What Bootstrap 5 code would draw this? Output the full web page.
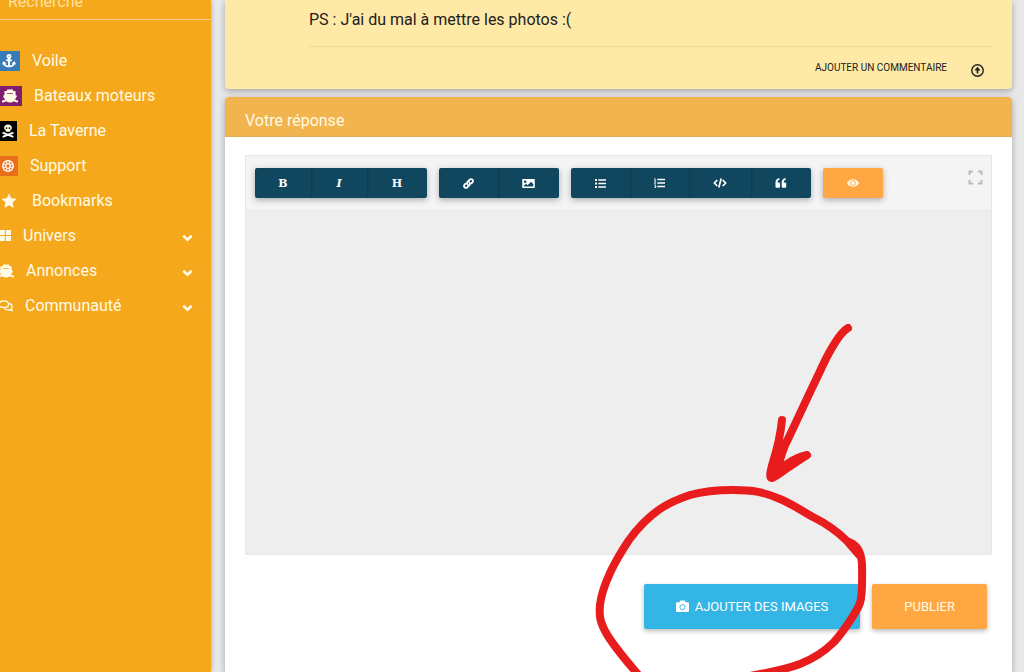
<!DOCTYPE html>
<html lang="fr">
<head>
<meta charset="utf-8">
<meta name="viewport" content="width=device-width, initial-scale=1">
<title>Votre réponse</title>
<link href="https://cdn.jsdelivr.net/npm/bootstrap@5.3.0/dist/css/bootstrap.min.css" rel="stylesheet">
<style>
  body { font-family: Roboto, "Liberation Sans", sans-serif; font-size: 16px; background: #e8e8e8; color: #212121; }
  .shell { height: 100vh; }
  .side { flex: 0 0 211px; background: #f5a81c; box-shadow: 0 0 5px rgba(0,0,0,.3); }
  /* the page is scrolled: the search box is partly above the fold */
  .search { margin-top: -16px; height: 36px; padding: 0 8px; border: 0; border-bottom: 1px solid #fbd388; background: transparent; color: #fff; }
  .search::placeholder { color: #ffe29c; opacity: 1; }
  .side-nav { padding-top: 23px; }
  .side-link { height: 35px; color: #fffbe6; text-decoration: none; gap: 12px; padding-right: 18px; }
  .tile { height: 20px; display: flex; align-items: center; }
  .tile svg, .ed-btn svg, .act svg, .round svg, .full svg { display: block; fill: currentColor; }
  .t-voile { background: #377bb8; padding: 0 4px 0 2px; }
  .t-bateau { background: #7d1e70; padding: 0 4px 0 2px; }
  .t-taverne { background: #000; padding: 0 3px 0 2px; }
  .t-support { background: #e8701c; padding: 0 4px 0 2px; }
  .t-star { padding: 0 4px 0 2px; }
  .main-col { padding: 0 12px 0 14px; }
  .panel { border-radius: 4px; box-shadow: 0 2px 6px rgba(0,0,0,.3); }
  .post { background: #ffe9a6; padding: 8px 20px 0 84px; height: 89px; border-radius: 0 0 4px 4px; }
  .post-foot { border-top: 1px solid #efd996; height: 43px; padding-right: 8px; gap: 24px; }
  .flat { border: 0; padding: 0; background: none; color: #212121; font-size: 10px; line-height: 16px; }
  .round { padding-top: 4px; }
  .reply { margin-top: 8px; background: #fff; border-radius: 4px 4px 0 0; }
  .reply-head { background: #f1b44f; color: #fffbe6; height: 40px; padding: 8px 20px 0; font-size: 16px; border-radius: 4px 4px 0 0; border-bottom: 1px solid #dfae59; }
  .reply-body { padding: 18px 20px; }
  .editor { border: 1px solid #e6e6e6; background: #f4f4f4; }
  .tools { height: 54px; padding: 0 8px 0 9px; gap: 12px; }
  .ed-group { border-radius: 2px; background: #11465f; box-shadow: 0 2px 6px rgba(0,0,0,.3); }
  .ed-btn { height: 30px; border: 0; padding: 0 24px; color: #fff; background: transparent; display: flex; align-items: center; justify-content: center; font: bold 11px "DejaVu Serif", serif; }
  .ed-btn + .ed-btn { box-shadow: inset 3px 0 3px -3px rgba(0,0,0,.4); }
  .ed-b { width: 56px; } .ed-h { width: 60px; }
  .view { background: #ffa743; }
  .full { border: 0; padding: 0; background: none; margin-bottom: 12px; }
  .zone { display: block; width: 100%; height: 344px; border: 0; border-top: 1px dotted #e2e2e2; background: #eee; resize: none; padding: 12px; }
  .acts { padding: 29px 5px 0; gap: 12px; }
  .act { height: 45px; border: 0; border-radius: 2px; padding: 0 32px; color: #fffbe6; font-size: 13px; box-shadow: 0 2px 5px rgba(0,0,0,.28); gap: 6px; }
  .act-img { background: #33b5e5; color: #fff; }
  .act-pub { background: #ffa743; }
  .scribble { position: absolute; top: 213px; right: 132px; pointer-events: none; }
</style>
</head>
<body>
<svg class="d-none" aria-hidden="true">
  <symbol id="ship" viewBox="0 0 16 14"><path fill-rule="evenodd" d="M5 .5h6v1.500h1.700q.9 0 .9.800V6l.9.400q.7.300.3 1l-1.800 3q1 1 3 1.200v1.800q-2.500 0-4-1.200-1.700 1.200-4 1.200t-4-1.200q-1.400 1.200-4 1.200v-1.800q2-.2 3-1.200l-1.800-3q-.4-.7.300-1l.9-.4V2.800q0-.8.900-.8H5zM5 4v.8h6V4z"/></symbol>
  <symbol id="chev" viewBox="0 0 11 8"><path d="M1.300 1.800 5.500 5.700l4.200-3.900" fill="none" stroke="#fffbe6" stroke-width="2.600"/></symbol>
</svg>
<div class="shell d-flex overflow-hidden">
  <aside class="side d-flex flex-column">
    <input class="search w-100" type="search" placeholder="Recherche" aria-label="Recherche">
    <nav class="side-nav d-flex flex-column">
      <a class="side-link d-flex align-items-center" href="#"><span class="tile t-voile"><svg width="14" height="14" viewBox="0 0 14 14"><g fill="none" stroke="#fff" stroke-width="1.900"><circle cx="7" cy="2.500" r="1.500"/><path d="M7 4v8.500M4.300 6.200h5.400M1.700 8.500Q2.200 12.400 7 12.400t5.300-3.900"/></g><path d="M0 10.500 1.500 7l3 2.500zM14 10.500l-1.500-3.500-3 2.500z" fill="#fff"/></svg></span>Voile</a>
      <a class="side-link d-flex align-items-center" href="#"><span class="tile t-bateau"><svg width="16" height="14"><use href="#ship"/></svg></span>Bateaux moteurs</a>
      <a class="side-link d-flex align-items-center" href="#"><span class="tile t-taverne"><svg width="12" height="14" viewBox="0 0 12 14"><path fill-rule="evenodd" d="M6 0.500c2.300 0 3.900 1.300 3.900 3.200 0 1.200-.7 2-1.600 2.500V7.800H3.700V6.200C2.800 5.700 2.100 4.900 2.100 3.700 2.100 1.800 3.700.500 6 .500M4.500 3.200a.9.900 0 1 0 0 1.800.9.900 0 0 0 0-1.800m3 0a.9.900 0 1 0 0 1.800.9.900 0 0 0 0-1.800"/><path d="m.6 8.600 10.800 4.200M11.400 8.600.6 12.800" stroke="#fff" stroke-width="1.800"/></svg></span>La Taverne</a>
      <a class="side-link d-flex align-items-center" href="#"><span class="tile t-support"><svg width="12" height="12" viewBox="0 0 12 12"><g fill="none" stroke="#fff"><circle cx="6" cy="6" r="5.200" stroke-width="1.500"/><circle cx="6" cy="6" r="2.300" stroke-width="1.300"/><path d="M4.700 1v3M7.300 1v3M4.700 8v3M7.300 8v3M1 4.700h3M1 7.300h3M8 4.700h3M8 7.300h3" stroke-width=".8"/></g></svg></span>Support</a>
      <a class="side-link d-flex align-items-center" href="#"><span class="tile t-star"><svg width="14" height="14" viewBox="0 0 13 13"><path d="m6.500 0 1.900 4.200 4.600.5-3.400 3.100.9 4.700-4-2.300-4 2.300.9-4.700L0 4.700l4.600-.5z" stroke="#fffbe6" stroke-width=".5" stroke-linejoin="round"/></svg></span>Bookmarks</a>
      <a class="side-link d-flex align-items-center" href="#"><span class="tile"><svg width="11" height="11" viewBox="0 0 11 11"><path d="M0 0h4.800v5H0zM5.800 0H11v5H5.800zM0 6h4.800v5H0zM5.800 6H11v5H5.800z"/></svg></span>Univers<svg class="ms-auto mt-1" width="11" height="8"><use href="#chev"/></svg></a>
      <a class="side-link d-flex align-items-center" href="#"><span class="tile"><svg width="14" height="14" viewBox="2 0 14 14"><use href="#ship" width="16" height="14"/></svg></span>Annonces<svg class="ms-auto mt-1" width="11" height="8"><use href="#chev"/></svg></a>
      <a class="side-link d-flex align-items-center" href="#"><span class="tile"><svg width="13" height="12" viewBox="0 0 13 12"><g fill="none" stroke="#fffbe6" stroke-width="1.300"><path d="M-2 7.800Q0 7.600.7 6.900 8.500 8.500 8.600 4.400 8.500.8 4 .8T-1 4.400"/><path d="M9 3.400q3.200.7 3.200 3.100 0 1.300-1 2.100.2 1.200 1.300 2-1.700.2-3-.9Q5.500 10.600 4 8"/></g></svg></span>Communauté<svg class="ms-auto mt-1" width="11" height="8"><use href="#chev"/></svg></a>
    </nav>
  </aside>
  <main class="main-col flex-grow-1 d-flex flex-column">
    <article class="post panel flex-shrink-0 d-flex flex-column justify-content-between">
      <p class="mb-0">PS : J'ai du mal à mettre les photos :(</p>
      <div class="post-foot d-flex align-items-center justify-content-end">
        <button class="flat" type="button">AJOUTER UN COMMENTAIRE</button>
        <button class="flat round" type="button" aria-label="Remonter"><svg width="13" height="13" viewBox="0 0 12 12"><circle cx="6" cy="6" r="5.300" fill="none" stroke="#212121" stroke-width="1.300"/><path d="M6 2.600 8.900 6H6.800v2.800H5.200V6H3.100z"/></svg></button>
      </div>
    </article>
    <section class="reply panel position-relative flex-grow-1">
      <h1 class="reply-head mb-0 d-flex align-items-center fw-normal">Votre réponse</h1>
      <div class="reply-body">
        <div class="editor">
          <div class="tools d-flex align-items-center">
            <div class="ed-group d-flex">
              <button class="ed-btn ed-b" type="button" aria-label="Gras">B</button>
              <button class="ed-btn ed-b fst-italic" type="button" aria-label="Italique">I</button>
              <button class="ed-btn ed-h" type="button" aria-label="Titre">H</button>
            </div>
            <div class="ed-group d-flex">
              <button class="ed-btn" type="button" aria-label="Lien"><svg width="11" height="11" viewBox="0 0 11 11"><g fill="none" stroke="#fff" stroke-width="1.800" stroke-linecap="round"><path d="M4.700 6.700Q3.300 5.200 4.600 3.800L6.700 1.700Q8 .5 9.400 1.700 10.600 3 9.400 4.300l-1 1"/><path d="M6.300 4.300Q7.700 5.800 6.400 7.200L4.300 9.300Q3 10.500 1.600 9.300.4 8 1.600 6.700l1-1"/></g></svg></button>
              <button class="ed-btn" type="button" aria-label="Image"><svg width="13" height="11" viewBox="0 0 12 10"><path fill-rule="evenodd" d="M1 .8h10q.8 0 .8.800v6.800q0 .8-.8.800H1q-.8 0-.8-.8V1.600Q.2.800 1 .8M3 2.200a1.200 1.200 0 1 0 0 2.400 1.200 1.200 0 0 0 0-2.400M1.600 7.800h8.800V5.500L8.300 3.400 5.200 6.500 3.900 5.300 1.600 7z"/></svg></button>
            </div>
            <div class="ed-group d-flex">
              <button class="ed-btn" type="button" aria-label="Liste à puces"><svg width="11" height="9" viewBox="0 0 11 9"><path d="M0 0h2v2H0zM3.300.2H11v1.600H3.300zM0 3.500h2v2H0zM3.300 3.700H11v1.600H3.300zM0 7h2v2H0zM3.300 7.200H11v1.600H3.300z"/></svg></button>
              <button class="ed-btn" type="button" aria-label="Liste numérotée"><svg width="11" height="10" viewBox="0 0 11 10"><path d="M3.300.7H11v1.600H3.300zM3.300 4.200H11v1.600H3.300zM3.300 7.700H11v1.600H3.300z"/><path d="M.3.500h.8v2.300M.3 2.800h1.700M.3 3.900h1.400L.4 5.900h1.500M.3 7.200h1.400v1l-.7.100.8.200v1H.2" fill="none" stroke="#fff" stroke-width=".8"/></svg></button>
              <button class="ed-btn" type="button" aria-label="Code"><svg width="14" height="10" viewBox="0 0 13 10"><path d="M3.800 2 .9 5l2.900 3M9.200 2l2.900 3-2.900 3M7.700.5 5.300 9.500" fill="none" stroke="#fff" stroke-width="1.700"/></svg></button>
              <button class="ed-btn" type="button" aria-label="Citation"><svg width="12" height="10" viewBox="0 0 12 10"><path id="q" d="M4.500.3v1.500q-2 .2-2 2.700H4q1 0 1 1v3q0 1.200-1 1.200H1.500Q.5 9.700.5 8.500V4.400Q.5.500 4.500.3"/><use href="#q" x="6.200"/></svg></button>
            </div>
            <div class="ed-group view d-flex">
              <button class="ed-btn" type="button" aria-label="Aperçu"><svg width="12" height="10" viewBox="0 0 12 10"><path fill="#fffbe6" fill-rule="evenodd" d="M0 5q2-3.800 6-3.800T12 5q-2 3.800-6 3.800T0 5m6-2.700a2.700 2.700 0 1 0 0 5.400 2.700 2.700 0 0 0 0-5.400"/><circle cx="6" cy="5" r="1.900" fill="#fffbe6"/></svg></button>
            </div>
            <button class="full ms-auto" type="button" aria-label="Plein écran"><svg width="15" height="15" viewBox="0 0 15 15"><path d="M1.500 5V1.500H5M10 1.500h3.500V5M13.500 10v3.500H10M5 13.500H1.500V10" fill="none" stroke="#b9b9b9" stroke-width="2"/></svg></button>
          </div>
          <textarea class="zone" aria-label="Votre réponse"></textarea>
        </div>
        <div class="acts d-flex justify-content-end">
          <button class="act act-img d-flex align-items-center" type="button"><svg width="13" height="13" viewBox="0 0 14 13"><path d="M1.400 2h2.300l.7-1.600Q4.600 0 5 0h4q.4 0 .6.400l.7 1.600h2.300Q14 2 14 3.300v7.900q0 1.300-1.400 1.300H1.400Q0 12.500 0 11.200V3.300Q0 2 1.400 2"/><circle cx="7" cy="7.200" r="2.800" fill="none" stroke="#33b5e5"/></svg>AJOUTER DES IMAGES</button>
          <button class="act act-pub" type="button">PUBLIER</button>
        </div>
      </div>
      <svg class="scribble" width="300" height="380" viewBox="0 0 300 380" fill="none" stroke="#e81c1c" stroke-width="8" stroke-linecap="round" stroke-linejoin="round" aria-hidden="true">
        <path d="M268 18C261 22 255 32 249 43C243 54 238 66 232 78L209 127Q202 140 198 158M202 110Q200 130 193 152Q188 169 192 168C199 165 205 159 212 155Q219 150 227 145Q217 147 207 154L195 163L204 138"/>
        <path d="M267 231C257 221 243 212 233 207C222 201 212 194 200 189C184 182 173 180 153 180C138 180 124 181 110 185C98 189 89 193 80 199C67 208 57 219 49 230C41 242 36 250 30 263C25 274 21 285 20 295C19 306 20 311 25 321C32 334 43 347 56 362L66 374M170 366C187 363 204 360 220 354C235 348 244 342 254 332C263 322 276 303 280 293C283 284 282 264 282 254C281 239 275 234 267 231L279 245"/>
      </svg>
    </section>
  </main>
</div>
<script src="https://cdn.jsdelivr.net/npm/bootstrap@5.3.0/dist/js/bootstrap.bundle.min.js"></script>
</body>
</html>
